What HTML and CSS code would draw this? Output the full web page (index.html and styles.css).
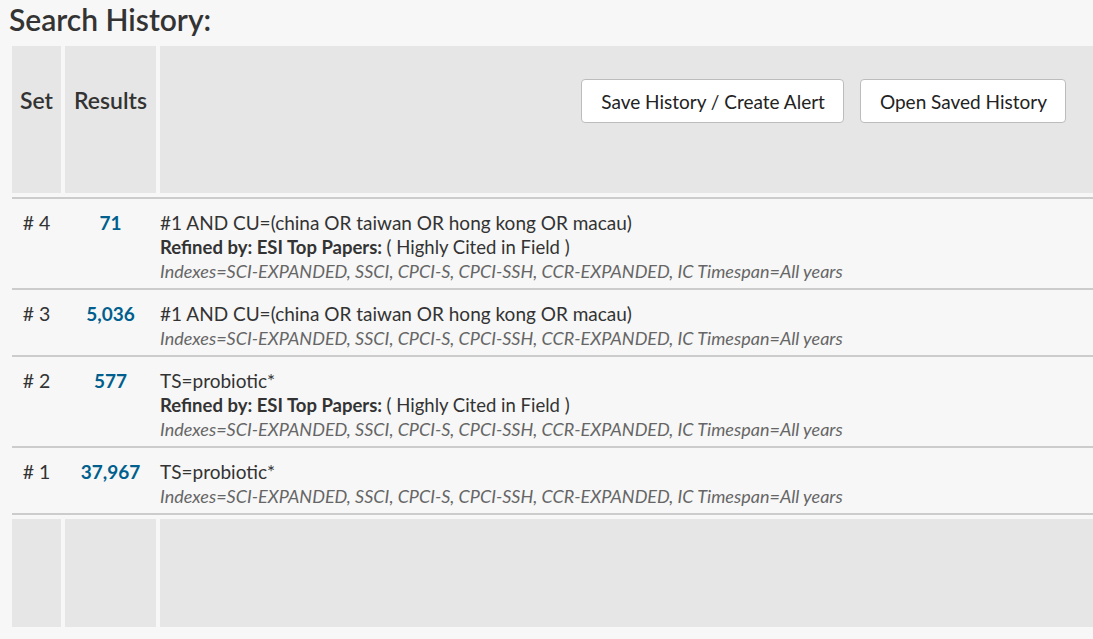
FILE: index.html
```html
<!DOCTYPE html>
<html lang="en">
<head>
<meta charset="utf-8">
<title>Search History</title>
<link rel="stylesheet" href="styles.css">
</head>
<body>
<h2 class="title">Search History:</h2>
<div class="history">
  <div class="head">
    <div class="hcell">Set</div>
    <div class="hcell">Results</div>
    <div class="hcell actions">
      <button class="btn">Save History / Create Alert</button>
      <button class="btn">Open Saved History</button>
    </div>
  </div>
  <div class="rows">
    <div class="row">
      <div class="set"># 4</div>
      <div class="res">71</div>
      <div class="query">
        <div class="q">#1 AND CU=(china OR taiwan OR hong kong OR macau)</div>
        <div class="refined">Refined by: ESI Top Papers: <span class="rv">( Highly Cited in Field )</span></div>
        <div class="idx">Indexes=SCI-EXPANDED, SSCI, CPCI-S, CPCI-SSH, CCR-EXPANDED, IC Timespan=All years</div>
      </div>
    </div>
    <div class="row">
      <div class="set"># 3</div>
      <div class="res">5,036</div>
      <div class="query">
        <div class="q">#1 AND CU=(china OR taiwan OR hong kong OR macau)</div>
        <div class="idx">Indexes=SCI-EXPANDED, SSCI, CPCI-S, CPCI-SSH, CCR-EXPANDED, IC Timespan=All years</div>
      </div>
    </div>
    <div class="row">
      <div class="set"># 2</div>
      <div class="res">577</div>
      <div class="query">
        <div class="q">TS=probiotic*</div>
        <div class="refined">Refined by: ESI Top Papers: <span class="rv">( Highly Cited in Field )</span></div>
        <div class="idx">Indexes=SCI-EXPANDED, SSCI, CPCI-S, CPCI-SSH, CCR-EXPANDED, IC Timespan=All years</div>
      </div>
    </div>
    <div class="row">
      <div class="set"># 1</div>
      <div class="res">37,967</div>
      <div class="query">
        <div class="q">TS=probiotic*</div>
        <div class="idx">Indexes=SCI-EXPANDED, SSCI, CPCI-S, CPCI-SSH, CCR-EXPANDED, IC Timespan=All years</div>
      </div>
    </div>
  </div>
  <div class="foot">
    <div class="fcell"></div>
    <div class="fcell"></div>
    <div class="fcell"></div>
  </div>
</div>
</body>
</html>
```

FILE: styles.css
```css
html, body {
  margin: 0;
  padding: 0;
  background: #f7f7f7;
  overflow: hidden;
}
body {
  font-family: Lato, "Open Sans", sans-serif;
  color: #333;
}
.title {
  margin: 0;
  padding: 0 0 0 9px;
  font-size: 30px;
  line-height: 38px;
  font-weight: 600;
  color: #333;
}
.history {
  margin: 8px 0 0 12px;
}
.head, .row, .foot {
  display: grid;
  grid-template-columns: 49px 91px 1fr;
  column-gap: 4px;
}
.hcell {
  background: #e6e6e6;
  height: 147px;
  padding-top: 33px;
  box-sizing: border-box;
  text-align: center;
  font-size: 23px;
  font-weight: 600;
  line-height: 42px;
  color: #333;
  white-space: nowrap;
}
.actions {
  display: flex;
  justify-content: flex-end;
  align-items: flex-start;
  gap: 16px;
  padding-right: 27px;
}
.btn {
  height: 44px;
  padding: 0 18px 0 19px;
  background: #fff;
  border: 1px solid #bcbcbc;
  border-radius: 4px;
  font-family: inherit;
  font-size: 19px;
  color: #222;
  cursor: pointer;
}
.rows {
  margin-top: 4px;
  border-top: 2px solid #ccc;
}
.row {
  border-bottom: 2px solid #ccc;
  padding: 12px 0 5px;
  line-height: 24px;
}
.row > div, .query > div {
  height: auto;
  line-height: 24px;
}
.set {
  text-align: center;
  font-size: 19.5px;
  color: #333;
}
.res {
  text-align: center;
  font-size: 19px;
  font-weight: 700;
  color: #005f8d;
}
.query {
  font-size: 19px;
  white-space: nowrap;
}
.q {
  color: #333;
}
.refined {
  font-size: 18.5px;
  font-weight: 700;
  color: #333;
}
.rv {
  font-weight: 400;
}
.idx {
  font-size: 18px;
  font-style: italic;
  color: #666;
}
.foot {
  margin-top: 4px;
}
.fcell {
  background: #e6e6e6;
  height: 108px;
}
```
